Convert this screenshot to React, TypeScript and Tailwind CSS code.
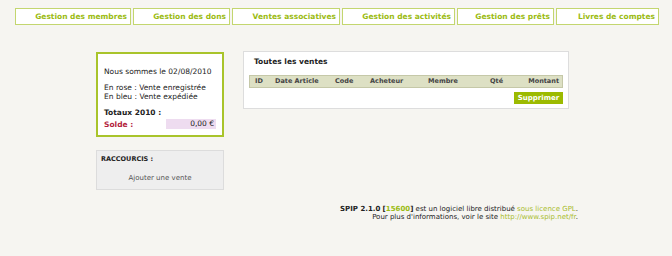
const TABS = [
  { label: 'Gestion des membres', w: 'w-[116px]' },
  { label: 'Gestion des dons', w: 'w-[97px]' },
  { label: 'Ventes associatives', w: 'w-[108px]' },
  { label: 'Gestion des activités', w: 'w-[113px]' },
  { label: 'Gestion des prêts', w: 'w-[97px]' },
  { label: 'Livres de comptes', w: 'w-[103px]' },
];

const COLS = ['ID', 'Date Article', 'Code', 'Acheteur', 'Membre', 'Qté', 'Montant'];

export default function App() {
  return (
    <div className="min-h-[256px] w-[672px] bg-[#f6f5f1] font-['DejaVu_Sans',Verdana,sans-serif] text-[#222]">
      {/* onglets */}
      <div className="flex gap-[2px] pl-[15px] pt-[8px]">
        {TABS.map((t) => (
          <div
            key={t.label}
            className={`${t.w} h-[17px] border border-[#c3d66f] bg-white flex items-center justify-end pr-[3px] text-[7.5px] font-bold text-[#9bbb12]`}
          >
            {t.label}
          </div>
        ))}
      </div>

      <div className="flex pl-[96px] pt-[27px]">
        {/* colonne gauche */}
        <div className="w-[128px] flex flex-col gap-[13px]">
          <div className="h-[85px] border-2 border-[#a9c42b] bg-white px-[6px] pt-[12px] text-[7.5px]">
            <p>Nous sommes le 02/08/2010</p>
            <p className="mt-[6px] leading-[9px]">En rose : Vente enregistrée</p>
            <p className="leading-[9px]">En bleu : Vente expédiée</p>
            <p className="mt-[6px] font-bold text-[7.5px]">Totaux 2010 :</p>
            <div className="flex items-center justify-between">
              <span className="font-bold text-[#b3223c]">Solde :</span>
              <span className="w-[50px] h-[10px] bg-[#eedcf0] text-right pr-[2px] leading-[10px]">0,00 €</span>
            </div>
          </div>
          <div className="h-[40px] border border-[#dcdcdc] bg-[#eeeeee] px-[4px] pt-[4px]">
            <p className="text-[6.5px] font-bold">RACCOURCIS :</p>
            <p className="mt-[8px] text-center text-[7px] text-[#555]">Ajouter une vente</p>
          </div>
        </div>

        {/* bloc principal */}
        <div className="ml-[19px] w-[326px] h-[58px] border border-[#dddddd] bg-white px-[5px] pt-[4px] self-start -mt-[1px]">
          <p className="pl-[5px] text-[7.5px] font-bold">Toutes les ventes</p>
          <div className="mt-[8px] h-[13px] border border-[#c5c8a8] bg-[#dde0c4] flex items-center text-[6.5px] font-bold text-[#444]">
            <span className="w-[20px] pl-[5px]">{COLS[0]}</span>
            <span className="w-[60px] pl-[5px]">{COLS[1]}</span>
            <span className="w-[35px] pl-[5px]">{COLS[2]}</span>
            <span className="w-[58px] pl-[5px]">{COLS[3]}</span>
            <span className="w-[62px] pl-[5px]">{COLS[4]}</span>
            <span className="w-[35px] pl-[5px]">{COLS[5]}</span>
            <span className="flex-1 text-right pr-[3px]">{COLS[6]}</span>
          </div>
          <div className="flex justify-end mt-[4px]">
            <button className="w-[49px] h-[12px] bg-[#9cba00] text-white text-[7px] font-bold leading-[12px]">Supprimer</button>
          </div>
        </div>
      </div>

      {/* pied de page */}
      <div className="w-[578px] pt-[15px] text-right text-[7px] leading-[8px]">
        <p>
          <span className="font-bold">SPIP 2.1.0</span> <span className="font-bold">[<span className="text-[#9bbb12]">15600</span>]</span> est un logiciel libre distribué{' '}
          <span className="text-[#a8bc2c]">sous licence GPL</span>.
        </p>
        <p>
          Pour plus d'informations, voir le site <span className="text-[#a8bc2c]">http://www.spip.net/fr</span>.
        </p>
      </div>
    </div>
  );
}
